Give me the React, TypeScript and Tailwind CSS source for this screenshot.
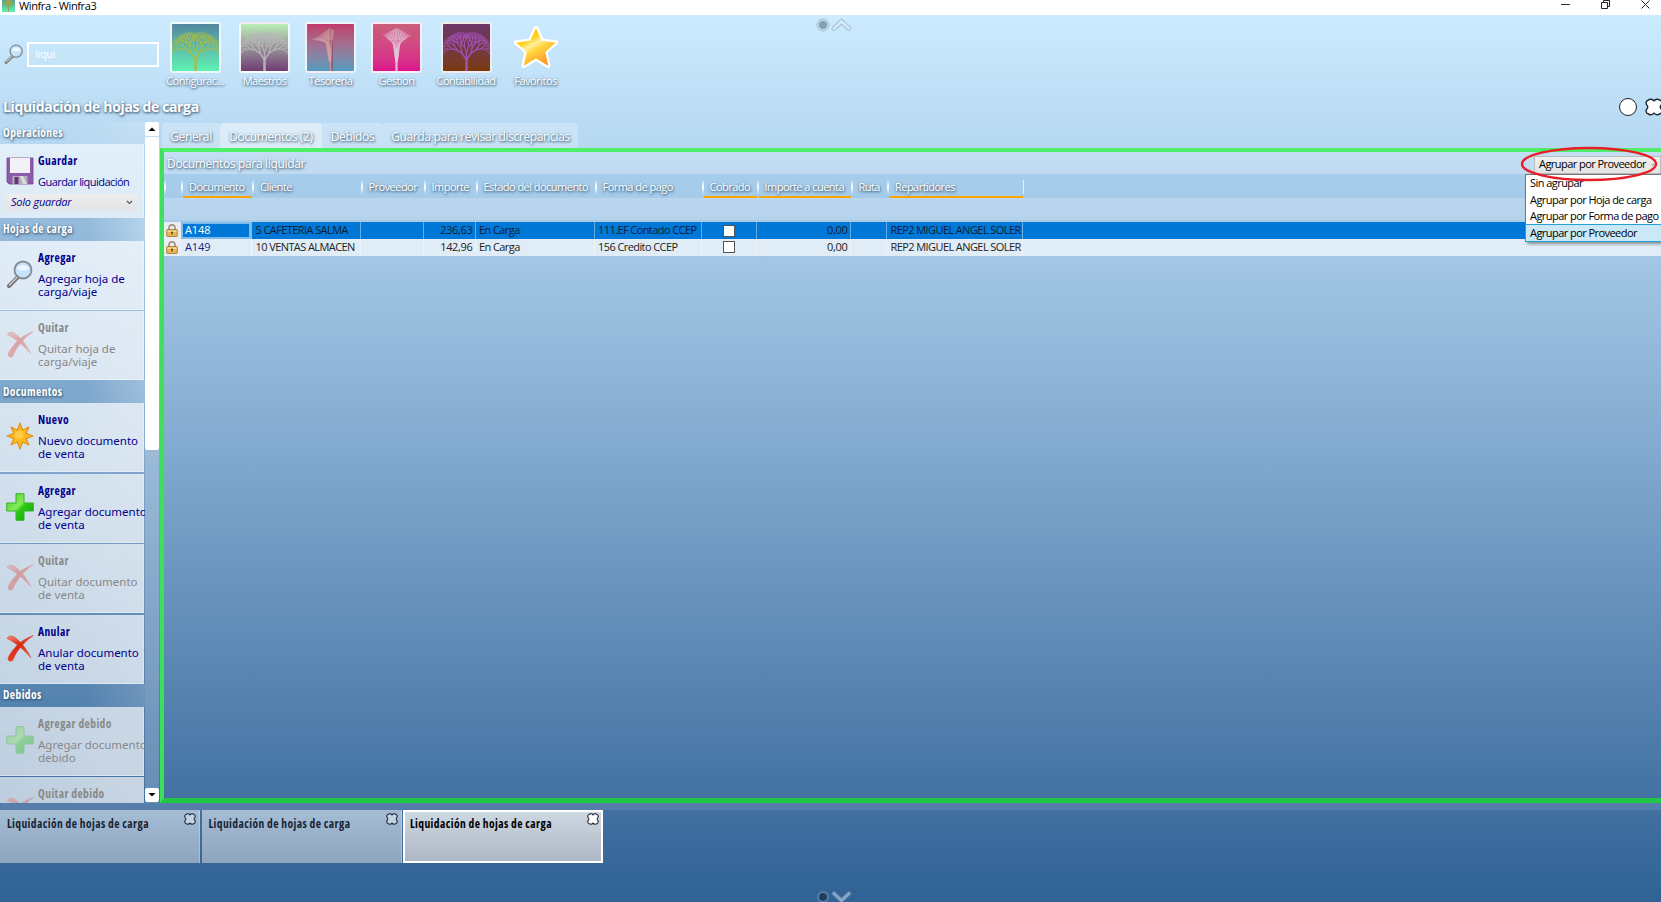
import React from "react";

type Seg = { x1: number; y1: number; x2: number; y2: number; w: number };

function grow(x: number, y: number, angle: number, len: number, spread: number, depth: number, out: Seg[]) {
  const x2 = x + Math.cos(angle) * len;
  const y2 = y - Math.sin(angle) * len;
  out.push({ x1: x, y1: y, x2, y2, w: 0.6 + depth * 0.18 });
  if (depth === 0) return;
  grow(x2, y2, angle + spread, len * 0.8, spread, depth - 1, out);
  grow(x2, y2, angle - spread, len * 0.8, spread, depth - 1, out);
}

function treeSegments(kind: string): Seg[] {
  const out: Seg[] = [];
  if (kind === "half" || kind === "fan") {
    const from = kind === "half" ? -19 : -14;
    const to = kind === "half" ? 3 : 15;
    for (let i = 0; i <= 12; i++) {
      const t = from + ((to - from) * i) / 12;
      const top = kind === "half" ? 4 + Math.abs(t) * 0.65 : 4 + Math.abs(t) * 0.5;
      const midY = 27 - Math.abs(t) * 0.45;
      out.push({ x1: 25 + t * 0.06, y1: 40, x2: 25 + t * 0.25, y2: midY, w: 0.8 });
      out.push({ x1: 25 + t * 0.25, y1: midY, x2: 25 + t, y2: top, w: 0.8 });
      out.push({ x1: 25 + t * 0.55, y1: 17, x2: 25 + t * 0.8, y2: top, w: 0.7 });
    }
    out.push({ x1: 25, y1: 50, x2: 25, y2: 26, w: 2.4 });
    return out;
  }
  out.push({ x1: 25, y1: 50, x2: 25, y2: 36, w: 2.8 });
  grow(25, 38, Math.PI / 2 + 0.6, 8, 0.36, 6, out);
  grow(25, 38, Math.PI / 2 - 0.6, 8, 0.36, 6, out);
  grow(25, 38, Math.PI / 2, 7.5, 0.34, 5, out);
  return out;
}

function Tree({ kind, color, bg }: { kind: string; color: string; bg: string }) {
  return (
    <span className={`block h-[51px] w-[51px] overflow-hidden rounded-[3px] border-2 border-white/90 bg-linear-to-b ${bg}`}>
      <svg viewBox="0 0 50 50" className="h-full w-full">
        {kind === "half" && <path d="M27 50V4l-3 1v45z" fill="#8d1838" />}
        {treeSegments(kind).map((s, i) => (
          <line key={i} x1={s.x1} y1={s.y1} x2={s.x2} y2={s.y2} stroke={color} strokeWidth={s.w} strokeOpacity={0.9} />
        ))}
      </svg>
    </span>
  );
}

function Star() {
  return (
    <svg viewBox="0 0 51 51" className="h-[51px] w-[51px]">
      <defs>
        <linearGradient id="star" x1="0.2" y1="0" x2="0.8" y2="1">
          <stop offset="0" stopColor="#ffc400" />
          <stop offset="0.3" stopColor="#ffd21e" />
          <stop offset="0.42" stopColor="#fff0a0" />
          <stop offset="0.55" stopColor="#ffd640" />
          <stop offset="1" stopColor="#ff8a1a" />
        </linearGradient>
      </defs>
      <path d="M26 6l5.8 12.8 14.2 1.6-10.7 9.500 3 13.800L26 36.600l-12.300 7.100 3-13.800L6 20.400l14.200-1.600z" fill="url(#star)" stroke="#fff" strokeWidth="4.500" strokeLinejoin="round" paintOrder="stroke" />
    </svg>
  );
}

function Magnifier({ className }: { className: string }) {
  return (
    <svg viewBox="0 0 28 28" className={className}>
      <path d="M12 17L3 26" stroke="#777" strokeWidth="4" strokeLinecap="round" />
      <path d="M11.5 17L3.5 25" stroke="#ccc" strokeWidth="1.5" strokeLinecap="round" />
      <circle cx="17" cy="10" r="8.5" fill="#c5e3fb" stroke="#858b92" strokeWidth="1.8" />
      <path d="M11 9a6.5 6.5 0 0 1 12 0q-6 3-12 0z" fill="#edf7ff" />
    </svg>
  );
}

function Disk() {
  return (
    <svg viewBox="0 0 28 28" className="h-7 w-7">
      <path d="M1 1h26v26H3l-2-2z" fill="#8e5bab" stroke="#744490" strokeWidth="0.8" />
      <path d="M4 1h20v15H4z" fill="#f3f1f8" />
      <path d="M6.500 19h15v8h-15z" fill="#b3adb8" />
      <path d="M8.500 20h4v7h-4z" fill="#65377d" />
      <path d="M14 19h3l4 8h-4z" fill="#ddd" />
    </svg>
  );
}

function Cross() {
  return (
    <svg viewBox="0 0 28 28" className="h-7 w-7">
      <defs>
        <linearGradient id="cross" x1="0" y1="0" x2="0.4" y2="1">
          <stop offset="0" stopColor="#f58a7a" />
          <stop offset="0.5" stopColor="#d92a10" />
          <stop offset="1" stopColor="#ee4a32" />
        </linearGradient>
      </defs>
      <path d="M27.500 1.500C20 4 13.500 8 10 12.500 6 17 2.500 22 2 24.500c-.4 3 4 3.500 5 1.500C9 20.500 11.500 17 14.500 13.500c4-5 7.500-8.500 13-12z" fill="url(#cross)" stroke="#c9301c" strokeWidth="0.4" />
      <path d="M1 4.500C2.500 1.500 6.500 1.500 9 3.500c6 4.500 11.500 11 16 20.500C19.500 17.500 13 11.500 7 8 4.500 6 3 5.500 1 4.500z" fill="url(#cross)" stroke="#c9301c" strokeWidth="0.4" />
    </svg>
  );
}

function Plus() {
  return (
    <svg viewBox="0 0 28 28" className="h-7 w-7">
      <defs>
        <linearGradient id="plus" x1="0" y1="0" x2="1" y2="1">
          <stop offset="0" stopColor="#4fc832" />
          <stop offset="0.45" stopColor="#84ec5a" />
          <stop offset="0.55" stopColor="#2fca12" />
          <stop offset="1" stopColor="#0a9a0a" />
        </linearGradient>
      </defs>
      <path d="M10 .7h8V10h9.300v8H18v9.300h-8V18H.7v-8H10z" fill="url(#plus)" stroke="#35b329" strokeWidth="1" strokeLinejoin="round" />
    </svg>
  );
}

function Burst() {
  return (
    <svg viewBox="0 0 28 28" className="h-7 w-7">
      <path d="M14 1l2.600 7 6.400-3-3 6.400 7 2.600-7 2.600 3 6.400-6.400-3L14 27l-2.600-7L5 23l3-6.400L1 14l7-2.600L5 5l6.400 3z" fill="#ffb91c" stroke="#dc951e" strokeWidth="1.200" strokeLinejoin="round" />
      <circle cx="13" cy="13" r="4" fill="#ffd45a" opacity="0.7" />
    </svg>
  );
}

function Lock() {
  return (
    <svg viewBox="0 0 12 13" className="h-[13px] w-3">
      <path d="M3 6V3.800a3 3 0 0 1 6 0V6" fill="none" stroke="#a39580" strokeWidth="1.700" />
      <rect x="0.700" y="5.500" width="10.600" height="7" rx="0.800" fill="#e5b455" stroke="#a3722a" strokeWidth="0.800" />
      <path d="M1.500 6.500h9v1.500h-9z" fill="#f9dc96" />
      <path d="M6 7.500v3M5 8.500h2" stroke="#5d3c10" strokeWidth="1.100" />
    </svg>
  );
}

function Clover({ className, fill, width }: { className: string; fill: string; width: number }) {
  return (
    <svg viewBox="0 0 18 18" className={className}>
      <path
        d="M9 2.800C10.500 .8 13.500 .8 14.800 2.200 17 2.500 17.500 5.500 16 7.200 15 8 15 10 16 10.800c1.500 1.700 1 4.700-1.200 5-1.300 1.400-4.300 1.400-5.800-.6-1.500 2-4.500 2-5.800.6C1 15.500.5 12.500 2 10.800 3 10 3 8 2 7.200.5 5.500 1 2.500 3.200 2.200 4.500.8 7.500.8 9 2.800z"
        fill={fill}
        stroke="#1c2733"
        strokeWidth={width}
      />
    </svg>
  );
}

const textGlow = "[text-shadow:0_1px_3px_#35556fcc,1px_1px_2px_#35556f99]";
const boldText = "text-[11.5px] font-bold tracking-[0.035em] [font-stretch:75%]";

const apps = [
  { label: "Configurac...", kind: "tree", color: "#a5bd4e", bg: "from-[#53879f] to-[#5ff2b2]", w: "w-[66px]" },
  { label: "Maestros", kind: "tree", color: "#b9b5bb", bg: "from-[#b9f0b4] to-[#6e3c74]", w: "w-[73px]" },
  { label: "Tesorería", kind: "half", color: "#cfa0a2", bg: "from-[#c13a6b] to-[#4d9dc0]", w: "w-[59px]" },
  { label: "Gestion", kind: "fan", color: "#e3c5dc", bg: "from-[#c75f7a] to-[#dd118c]", w: "w-[73px]" },
  { label: "Contabilidad", kind: "tree", color: "#a951bd", bg: "from-[#6a3565] to-[#7a3a08]", w: "w-[66px]" },
];

function Toolbar() {
  return (
    <div className="flex h-[80px] items-start">
      <Magnifier className="ml-[4px] mt-[29px] h-[20px] w-[20px]" />
      <div className="ml-[3px] mt-[27px] flex h-[25px] w-[132px] items-center border-2 border-white pl-[6px] text-[11px] tracking-[-0.03em] text-white">liqui</div>
      <div className="ml-[3px] mt-[7px] flex">
        {apps.map((a) => (
          <div key={a.label} className={`flex flex-col items-center ${a.w}`}>
            <Tree kind={a.kind} color={a.color} bg={a.bg} />
            <span className={`whitespace-nowrap text-[11px] leading-4 tracking-[-0.045em] text-white ${textGlow}`}>{a.label}</span>
          </div>
        ))}
        <div className="flex w-[73px] flex-col items-center">
          <Star />
          <span className={`text-[11px] leading-4 tracking-[-0.045em] text-white ${textGlow}`}>Favoritos</span>
        </div>
      </div>
    </div>
  );
}

function GroupHead({ children }: { children: string }) {
  return (
    <div className={`flex h-[23px] shrink-0 items-center bg-linear-to-r from-[#5689b540] from-60% to-white/15 pl-[3px] text-white ${boldText} ${textGlow}`}>
      {children}
    </div>
  );
}

type CardProps = { icon: React.ReactNode; title: string; lines: string[]; off?: boolean };

function Card({ icon, title, lines, off }: CardProps) {
  return (
    <div className={`mb-[1.500px] flex h-[69px] w-[144px] shrink-0 border-r border-b border-white/40 bg-linear-to-r from-white/65 to-white/70 pl-[6px] ${off ? "text-[#888]" : "text-[#00008b]"}`}>
      <div className={`mt-[19px] h-7 w-7 shrink-0 ${off ? "opacity-35" : ""}`}>{icon}</div>
      <div className="ml-[4px] mt-[9px] whitespace-nowrap">
        <div className={`mb-[6px] h-4 leading-4 ${boldText}`}>{title}</div>
        <div className="font-['Noto_Sans','Open_Sans',sans-serif] text-[11.500px] leading-[13px] [font-stretch:87.5%]">
          {lines[0]}
          <br />
          {lines[1]}
        </div>
      </div>
    </div>
  );
}

function Sidebar() {
  return (
    <div className="flex h-[681px] w-[160px] shrink-0">
      <div className="flex w-[145px] flex-col overflow-hidden">
        <div className={`flex h-[22px] shrink-0 items-center bg-linear-to-r from-transparent from-50% to-white/15 pl-[3px] text-white ${boldText} ${textGlow}`}>Operaciones</div>
        <div className="h-[73.500px] w-[144px] shrink-0 border-r border-white/40 bg-white/60 pl-[6px] text-[11px] text-[#00008b]">
          <div className="flex h-[50px]">
            <div className="mt-[13px]"><Disk /></div>
            <div className="ml-[4px] mt-[9px]">
              <div className={`mb-[6px] h-4 leading-4 ${boldText}`}>Guardar</div>
              <div className="h-[13px] whitespace-nowrap leading-[13px] tracking-[-0.05em]">Guardar liquidación</div>
            </div>
          </div>
          <div className="flex h-[17px] w-[131px] items-center bg-linear-to-b from-[#eee] to-[#e2e3e6] pl-[5px] pr-[4px] italic">
            <span className="flex-1 tracking-[-0.02em]">Solo guardar</span>
            <svg viewBox="0 0 7 5" className="h-[5px] w-[7px]"><path d="M1 1l2.500 2.500L6 1" fill="none" stroke="#555" strokeWidth="1.200" /></svg>
          </div>
        </div>
        <GroupHead>Hojas de carga</GroupHead>
        <Card icon={<Magnifier className="h-7 w-7" />} title="Agregar" lines={["Agregar hoja de", "carga/viaje"]} />
        <Card off icon={<Cross />} title="Quitar" lines={["Quitar hoja de", "carga/viaje"]} />
        <div className="-mt-[1.500px] flex shrink-0 flex-col"><GroupHead>Documentos</GroupHead></div>
        <Card icon={<Burst />} title="Nuevo" lines={["Nuevo documento", "de venta"]} />
        <Card icon={<Plus />} title="Agregar" lines={["Agregar documento", "de venta"]} />
        <Card off icon={<Cross />} title="Quitar" lines={["Quitar documento", "de venta"]} />
        <Card icon={<Cross />} title="Anular" lines={["Anular documento", "de venta"]} />
        <div className="-mt-[1.500px] flex shrink-0 flex-col"><GroupHead>Debidos</GroupHead></div>
        <Card off icon={<Plus />} title="Agregar debido" lines={["Agregar documento", "debido"]} />
        <div className="flex h-[27px] w-[144px] shrink-0 overflow-hidden bg-linear-to-r from-white/65 to-white/70 pl-[6px] text-[#888]">
          <div className="mt-[19px] h-7 w-7 shrink-0 opacity-35"><Cross /></div>
          <div className={`ml-[4px] mt-[9px] h-4 leading-4 ${boldText}`}>Quitar debido</div>
        </div>
      </div>
      <div className="flex w-[14px] flex-col justify-between bg-white/20">
        <div>
          <div className="flex h-[14px] items-center justify-center rounded-[2px] bg-white">
            <svg viewBox="0 0 8 4" className="h-1 w-2"><path d="M0.500 4L4 .5 7.500 4z" fill="#000" /></svg>
          </div>
          <div className="mt-px h-[313px] rounded-[2px] bg-white" />
        </div>
        <div className="mb-px flex h-[14px] items-center justify-center rounded-[2px] bg-white">
          <svg viewBox="0 0 8 4" className="h-1 w-2"><path d="M.5 0L4 3.500 7.500 0z" fill="#000" /></svg>
        </div>
      </div>
    </div>
  );
}

const tabs = [
  { label: "General", w: "w-[58px]", on: false },
  { label: "Documentos (2)", w: "w-[102px]", on: true },
  { label: "Debidos", w: "w-[61px]", on: false },
  { label: "Guarda para revisar discrepancias", w: "w-[195px]", on: false },
];

const columns = [
  { label: "", w: "w-[17px]", mark: false },
  { label: "Documento", w: "w-[71px]", mark: true },
  { label: "Cliente", w: "w-[108.500px]", mark: false },
  { label: "Proveedor", w: "w-[63px]", mark: false },
  { label: "Importe", w: "w-[52px]", mark: false },
  { label: "Estado del documento", w: "w-[119px]", mark: false },
  { label: "Forma de pago", w: "w-[107px]", mark: false },
  { label: "Cobrado", w: "w-[55px]", mark: true },
  { label: "Importe a cuenta", w: "w-[94px]", mark: true },
  { label: "Ruta", w: "w-[36.500px]", mark: false },
  { label: "Repartidores", w: "w-[136px]", mark: true },
];

const rows = [
  ["A148", "5 CAFETERIA SALMA", "", "236,63", "En Carga", "111.EF Contado CCEP", "check", "0,00", "", "REP2 MIGUEL ANGEL SOLER"],
  ["A149", "10 VENTAS ALMACEN", "", "142,96", "En Carga", "156 Credito CCEP", "check", "0,00", "", "REP2 MIGUEL ANGEL SOLER"],
];

function Cell({ index, value, selected }: { index: number; value: string; selected: boolean }) {
  const width = columns[index + 1].w;
  if (index === 0) {
    return (
      <div className={`flex shrink-0 items-center border-r border-white/50 tracking-[-0.01em] ${width} ${selected ? "border-2 border-r-[3px] border-white pl-[2px] text-white" : "pl-[4px] text-[#1a1a8c]"}`}>{value}</div>
    );
  }
  const right = index === 3 || index === 7;
  return (
    <div className={`flex shrink-0 items-center border-r border-white/40 ${width} ${right ? "justify-end pr-[2px] tracking-[-0.03em]" : value === "check" ? "justify-center" : "pl-[3.500px]"}`}>
      {value === "check" ? <span className="h-[12px] w-[12px] border border-[#555] bg-white" /> : value}
    </div>
  );
}

const options = ["Sin agrupar", "Agrupar por Hoja de carga", "Agrupar por Forma de pago", "Agrupar por Proveedor"];

function Grid() {
  return (
    <div className="relative flex h-[655px] flex-col border-[4px] border-r-0 border-b-[5px] border-t-[#4fef6a] border-b-[#20c745] border-l-[#3de05a]">
      <div className="flex h-[22px] items-center justify-between bg-white/20 pl-[3px] text-white">
        <span className={`pt-[2px] text-[12px] tracking-[-0.027em] ${textGlow}`}>Documentos para liquidar</span>
        <span className="mt-[3px] flex h-[18px] w-[127px] items-center justify-between whitespace-nowrap border border-[#bbb] bg-linear-to-b from-[#f0f0f0] to-[#e3e3e3] pl-[4px] pr-[4px] text-[11px] tracking-[-0.05em] text-black">
          Agrupar por Proveedor
          <svg viewBox="0 0 6 5" className="h-1 w-1.5"><path d="M1 1l2 2 2-2" fill="none" stroke="#777" /></svg>
        </span>
      </div>
      <div className="flex h-[24px] bg-[#9cc6e8]/45">
        {columns.map((c, i) => (
          <div key={i} className={`flex shrink-0 pt-[6px] ${c.w}`}>
            <span className="h-[14px] w-[2px] bg-linear-to-b from-white/10 via-white to-white/10" />
            <span className={`-mt-[6px] flex h-[24px] flex-1 items-center whitespace-nowrap border-b-2 pl-[6px] pt-[4px] text-[11px] tracking-[-0.048em] text-white ${c.mark ? "border-[#ffa500]" : "border-transparent"} ${textGlow}`}>{c.label}</span>
          </div>
        ))}
        <span className="mt-[6px] h-[14px] w-px bg-white/70" />
      </div>
      <div className="h-[22px] bg-white/15" />
      <div className="mt-[2px] flex flex-col text-[11px] tracking-[-0.053em] whitespace-nowrap">
        {rows.map((r, i) => (
          <div key={r[0]} className={`flex ${i === 0 ? "h-[17px] bg-[#0078d7] text-[#101c30]" : "h-[16.500px] bg-[#e0ecf6] text-[#222]"}`}>
            <div className="flex w-[17px] shrink-0 items-center bg-[#e8eef4] pl-[2px]"><Lock /></div>
            {r.map((v, j) => <Cell key={j} index={j} value={v} selected={i === 0} />)}
          </div>
        ))}
      </div>
      <div className="absolute right-0 top-[22px] w-[136px] border border-r-0 border-[#777] bg-white text-[11px] tracking-[-0.05em] text-black shadow-[2px_2px_3px_#0006]">
        {options.map((o, i) => (
          <div key={o} className={`flex h-[16.500px] items-center whitespace-nowrap pl-[4px] ${i === 3 ? "bg-[#cbe8f6] outline outline-[#26a0da]" : ""}`}>{o}</div>
        ))}
      </div>
      <svg viewBox="0 0 138 36" className="absolute right-[3px] top-[-6px] h-9 w-[138px]">
        <ellipse cx="69" cy="18" rx="67" ry="16" fill="none" stroke="#e81d25" strokeWidth="2.400" />
      </svg>
    </div>
  );
}

function Task({ on }: { on?: boolean }) {
  return (
    <div className={`flex h-[53px] items-start justify-between ${boldText} ${on ? "w-[200px] border-2 border-white bg-linear-to-b from-[#ced8e2] to-[#aeb7c4] pl-[5px] pr-[2px] text-black" : "mr-[1.500px] w-[200px] border-t border-r border-white/25 bg-linear-to-b from-[#a5bcd5] to-[#8fa5be] pl-[7px] pr-[3px] text-[#152536]"}`}>
      <span className={on ? "mt-[3px]" : "mt-[4px]"}>Liquidación de hojas de carga</span>
      <Clover className={`h-3 w-3 ${on ? "mt-[1px]" : "mt-[2px]"}`} fill={on ? "#fff" : "#c2d3e4"} width={1.6} />
    </div>
  );
}

function Pager({ down }: { down?: boolean }) {
  return (
    <svg viewBox="0 0 36 14" className="h-[14px] w-9">
      <circle cx="7" cy="7" r="6" fill={down ? "#5985ae" : "#c2dced"} stroke={down ? "#456f96" : "#9fbed0"} />
      <circle cx="7" cy="7" r="4" fill={down ? "#203f60" : "#839eae"} />
      <path d={down ? "M18 3.500l7.500 7 7.500-7" : "M18 10.500l7.500-7 7.500 7"} fill="none" stroke={down ? "#5279a2" : "#a1bbcc"} strokeWidth="4.600" strokeLinecap="round" />
      <path d={down ? "M18 3.500l7.500 7 7.500-7" : "M18 10.500l7.500-7 7.500 7"} fill="none" stroke={down ? "#86a8c9" : "#d2eafa"} strokeWidth="3" strokeLinecap="round" />
    </svg>
  );
}

export default function App() {
  return (
    <div className="flex h-[902px] w-full flex-col overflow-hidden bg-white font-['Open_Sans','Noto_Sans',sans-serif]">
      <header className="flex h-[15px] items-center justify-between">
        <div className="flex items-center">
          <span className="-mt-[7px] ml-[2px] block h-[15px] w-[13px] overflow-hidden bg-linear-to-b from-[#53879f] to-[#5ff2b2]">
            <svg viewBox="0 0 13 15" className="h-full w-full"><path d="M6.500 15V7M6.500 11L2 7M6.500 11L11 7" stroke="#93a84e" fill="none" /><path d="M1 8a5.500 5 0 0 1 11 0" fill="#93a84e" /></svg>
          </span>
          <span className="-mt-[4px] ml-[4px] text-[11px] leading-[14px] tracking-[-0.035em] text-black">Winfra - Winfra3</span>
        </div>
        <div className="flex items-center gap-[31px] pr-[11px] pb-[7px]">
          <svg viewBox="0 0 9 9" className="h-[9px] w-[9px]"><path d="M0 4.500h9" stroke="#333" /></svg>
          <svg viewBox="0 0 9 9" className="h-[9px] w-[9px]"><path d="M.5 2.500h6v6h-6zM2.500 2V.5h6v6H7" fill="none" stroke="#222" /></svg>
          <svg viewBox="0 0 9 9" className="h-[9px] w-[9px]"><path d="M.5 .5l8 8M8.500 .5l-8 8" stroke="#222" /></svg>
        </div>
      </header>
      <main className="relative flex h-[887px] flex-col bg-linear-to-b from-[#ccebff] via-[#84abd0] via-48% to-[#306295]">
        <div className="absolute left-[816px] top-[3px]"><Pager /></div>
        <Toolbar />
        <div className="flex h-[27px] items-center justify-between pb-[3px]">
          <h1 className={`pl-[3px] text-[14px] font-bold leading-6 tracking-[-0.025em] text-white ${textGlow}`}>Liquidación de hojas de carga</h1>
          <div className="-mr-[2px] flex items-center gap-[8px]">
            <span className="h-[18px] w-[18px] rounded-full border-[1.500px] border-[#222] bg-white" />
            <Clover className="h-[18px] w-[18px]" fill="#fff" width={1.4} />
          </div>
        </div>
        <div className="flex h-[681px]">
          <Sidebar />
          <section className="min-w-0 flex-1">
            <nav className="ml-[2px] flex h-[26px] pt-[1px]">
              {tabs.map((t) => (
                <div key={t.label} className={`flex shrink-0 items-center justify-center whitespace-nowrap rounded-t-[3px] pt-[2px] text-[12px] tracking-[-0.03em] text-white ${t.w} ${t.on ? "bg-white/50" : "bg-white/25"} ${textGlow}`}>{t.label}</div>
              ))}
            </nav>
            <Grid />
          </section>
        </div>
        <div className="flex h-[60px] bg-linear-to-b from-white/10 from-[7px] to-transparent to-[7px] pt-[7px]">
          <Task />
          <Task />
          <Task on />
        </div>
        <div className="absolute left-[816px] top-[875px]"><Pager down /></div>
      </main>
    </div>
  );
}
